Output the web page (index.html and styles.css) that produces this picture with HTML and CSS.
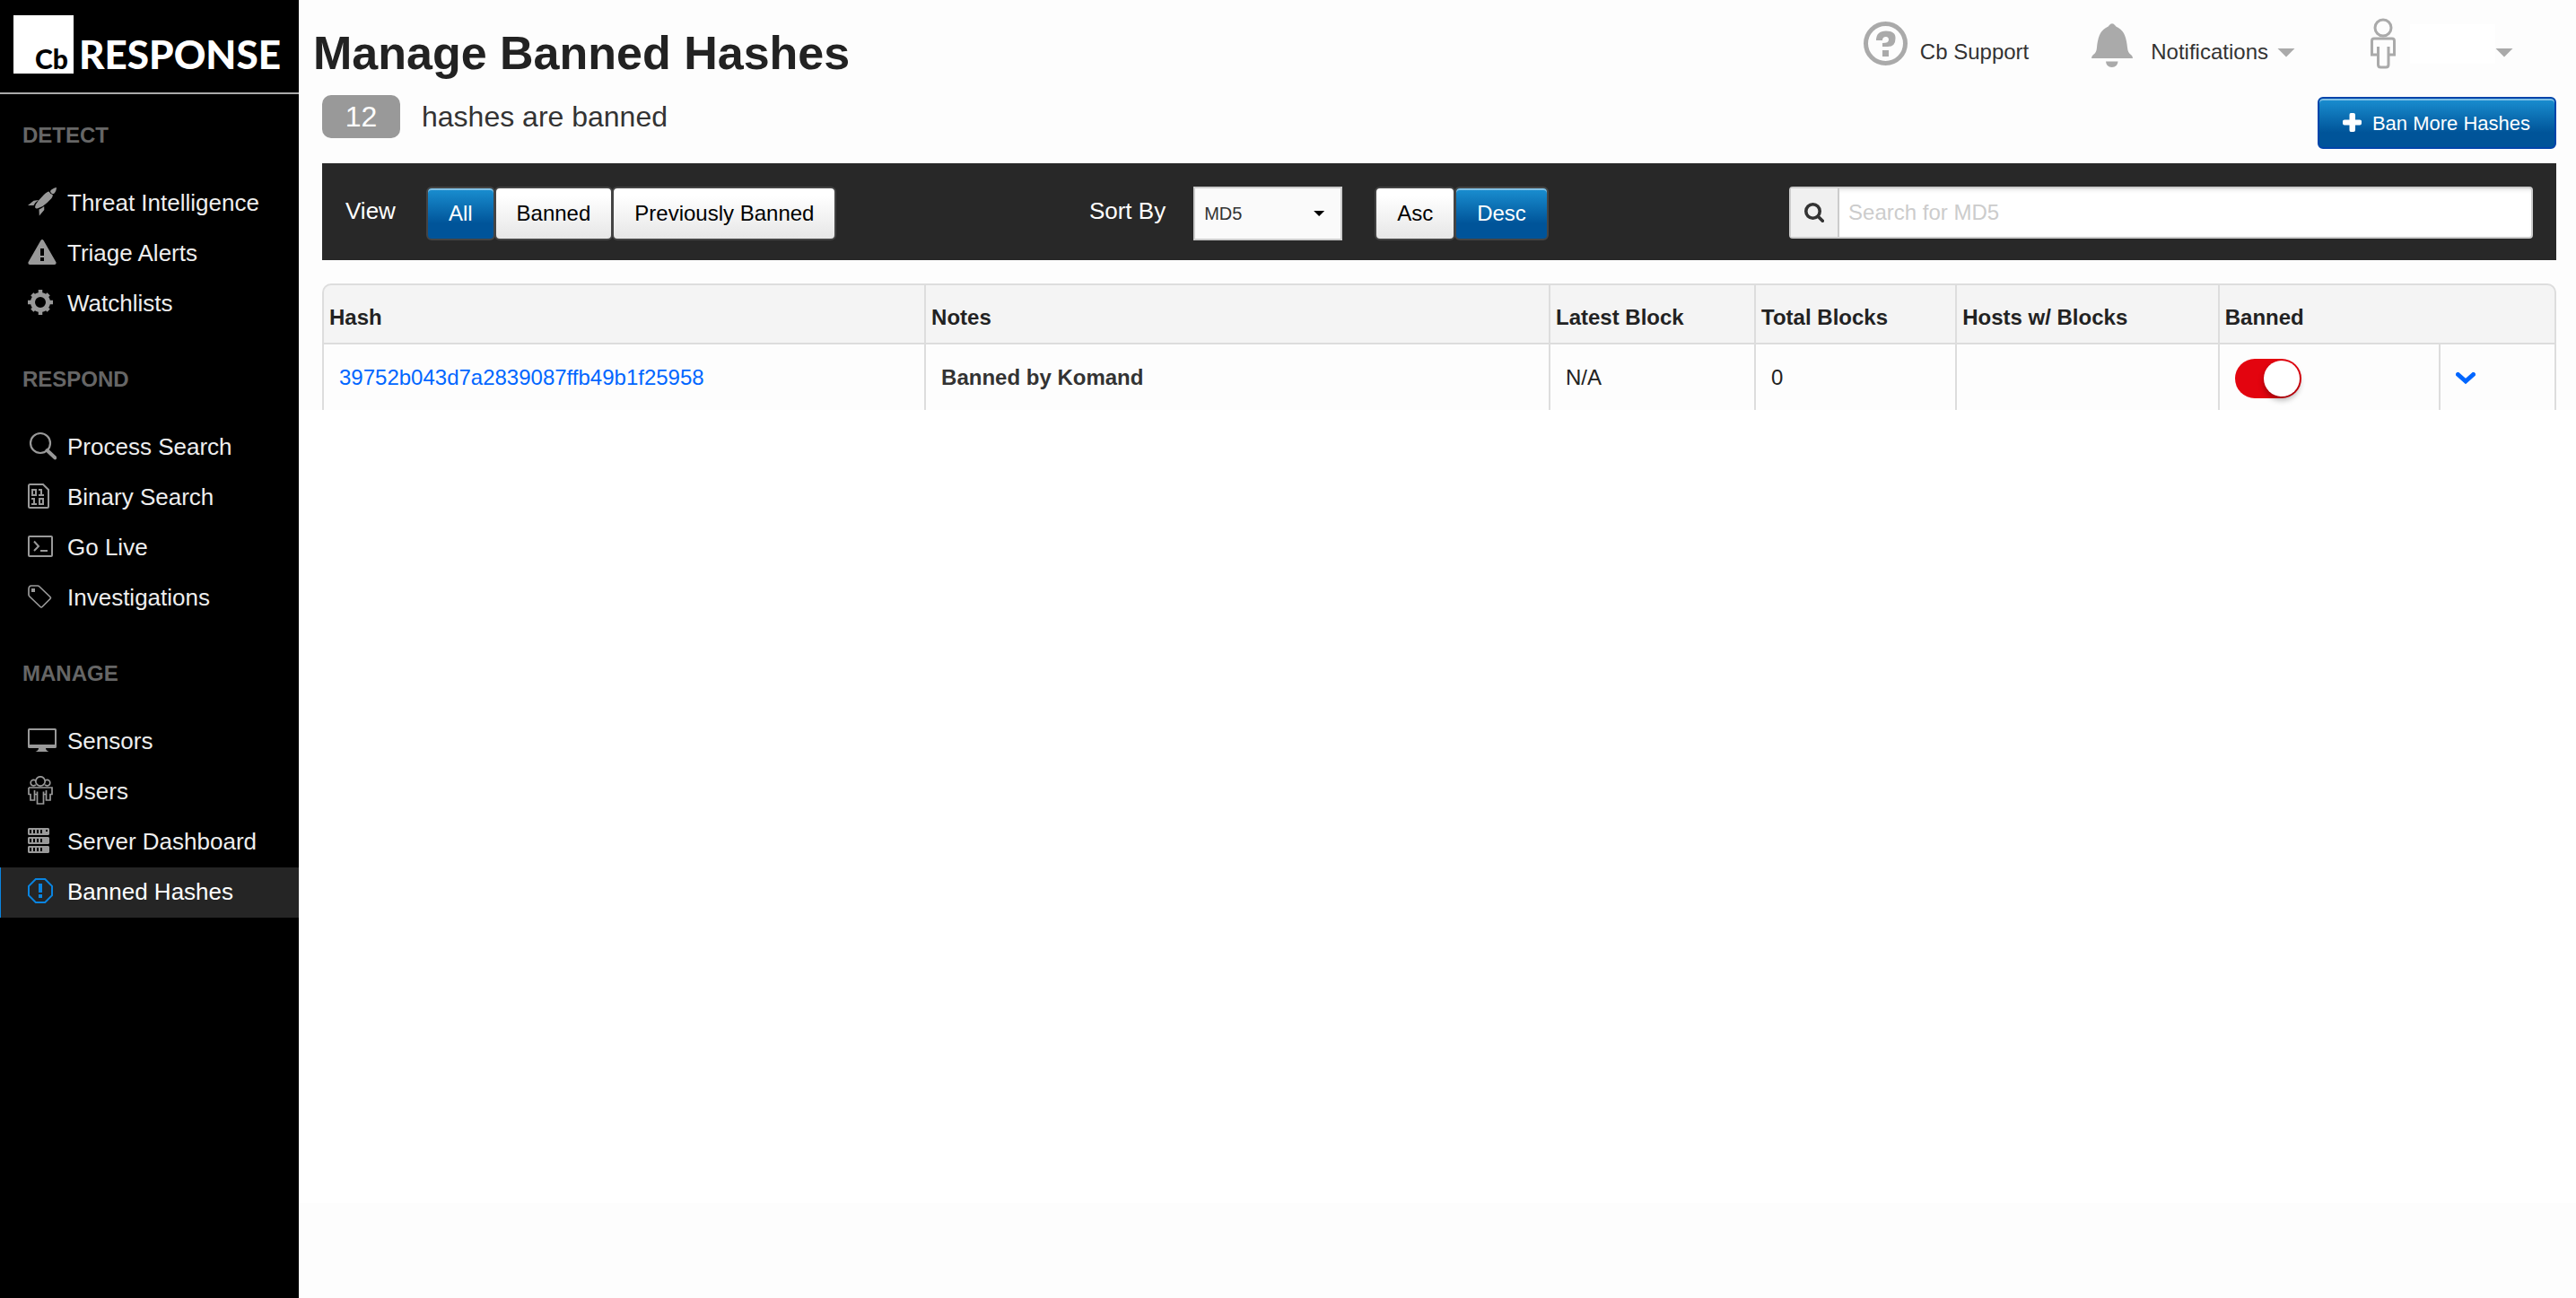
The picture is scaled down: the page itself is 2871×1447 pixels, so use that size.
FILE: index.html
```html
<!DOCTYPE html>
<html lang="en">
<head>
<meta charset="utf-8">
<title>Manage Banned Hashes</title>
<link rel="stylesheet" href="styles.css">
</head>
<body>
<div class="app">
  <aside class="sidebar">
    <a class="brand" href="#"><span class="brand-box">Cb</span><span class="brand-name">RESPONSE</span></a>
    <nav class="menu" aria-label="Main">
      <section class="menu-section">
        <h2>DETECT</h2>
        <ul>
          <li><a href="#"><svg viewBox="0 0 32 32" fill="currentColor"><path d="M32 0C29 .5 26.500 2 25 4L25.500 5.500 27 7 29 7C31 5 32 2.500 32 0ZM23.500 4.500Q21.500 4.500 18 8L11.500 15Q8.500 18.500 8 22Q8.500 24 11 23.200L16.500 21Q22.500 16.500 26.500 12Q28 10 27.800 8Q25 7.500 23.500 4.500ZM12 14L6.500 14.700 0 20H6.500Q8 16.500 12 14ZM18.200 21L18.300 25 12.800 31.500 12.500 24.500Q15.500 23 18.200 21Z"/></svg>Threat Intelligence</a></li>
          <li><a href="#"><svg viewBox="0 0 32 32" fill="currentColor"><path fill-rule="evenodd" d="M14.300 3.200Q16 .8 17.700 3.200L31.600 27.500Q32 29.800 30 30H2Q0 29.800 .4 27.500ZM14 12V20H18V12ZM14 22V26H18V22Z"/></svg>Triage Alerts</a></li>
          <li><a href="#"><svg viewBox="0 0 32 32"><circle cx="14" cy="16" r="8.500" fill="none" stroke="currentColor" stroke-width="5"/><path d="M14 2V7M14 25V30M0 16H5M23 16H28M4.800 6.800L8 10M20 22L23.200 25.200M4.800 25.200L8 22M20 10L23.200 6.800" fill="none" stroke="currentColor" stroke-width="4.500"/></svg>Watchlists</a></li>
        </ul>
      </section>
      <section class="menu-section">
        <h2>RESPOND</h2>
        <ul>
          <li><a href="#"><svg viewBox="0 0 32 32" fill="none" stroke="currentColor"><circle cx="14" cy="13" r="11" stroke-width="2.200"/><path d="M21.500 21L30.300 29.300" stroke-width="4" stroke-linecap="round"/></svg>Process Search</a></li>
          <li><a href="#"><svg viewBox="0 0 32 32" fill="none" stroke="currentColor" stroke-width="2"><path d="M2.500 3H17L23 9V27.500Q23 29 21.500 29H2.500Q1 29 1 27.500V4.500Q1 3 2.500 3Z"/><path d="M5 9H9V15H5ZM12 9H15V15M12 15H18M4 19H7V25M4 25H10M13 19H17V25H13Z"/></svg>Binary Search</a></li>
          <li><a href="#"><svg viewBox="0 0 32 32" fill="none" stroke="currentColor" stroke-width="2"><rect x="1" y="5" width="26" height="22" rx="1"/><path d="M7 10.500L12 16 7 21M14 21H22"/></svg>Go Live</a></li>
          <li><a href="#"><svg viewBox="0 0 32 32" fill="none" stroke="currentColor" stroke-width="1.700"><path d="M1 8Q1 4 4 4H11Q12 4 13 5L25 16.500Q26 17.500 25 18.500L16 27.500Q15 28.500 14 27.500L2 16Q1 15 1 14Z"/><path d="M4 7H8V11H4Z" fill="currentColor" stroke="none"/></svg>Investigations</a></li>
        </ul>
      </section>
      <section class="menu-section">
        <h2>MANAGE</h2>
        <ul>
          <li><a href="#"><svg viewBox="0 0 32 32" fill="currentColor"><path fill-rule="evenodd" d="M1.500 3H30.500Q32 3 32 4.500V23.500Q32 25 30.500 25H20Q20 27.500 23.500 29H8.500Q12 27.500 12 25H1.500Q0 25 0 23.500V4.500Q0 3 1.500 3ZM2 5V21H30V5Z"/></svg>Sensors</a></li>
          <li><a href="#"><svg viewBox="0 0 32 32" fill="none" stroke="currentColor" stroke-width="1.700"><circle cx="14" cy="6" r="5.200"/><path d="M9 5.500A3.300 3.300 0 1 0 9 9.800M19 5.500A3.300 3.300 0 1 1 19 9.800M1 13H27V20.500H25V27H20.500V16M1 13V20.500H3V27H7.500V16M7.500 20.500H10.500M20.500 20.500H17.500M10.500 17.500V31H17.500V17.500"/></svg>Users</a></li>
          <li><a href="#"><svg viewBox="0 0 32 32" fill="currentColor"><path fill-rule="evenodd" d="M1 2H23L24 3V9L23 10H1L0 9V3ZM2 4V8H4V4ZM6 4V8H8V4ZM10 4V8H12V4ZM14 4V8H16V4ZM20 4V6H22V4ZM1 12H23L24 13V19L23 20H1L0 19V13ZM2 14V18H4V14ZM6 14V18H8V14ZM10 14V18H12V14ZM14 14V18H16V14ZM1 22H23L24 23V29L23 30H1L0 29V23ZM2 24V28H4V24ZM6 24V28H8V24ZM10 24V28H12V24ZM14 24V28H16V24Z"/></svg>Server Dashboard</a></li>
          <li><a href="#" class="active" aria-current="page"><svg viewBox="0 0 32 32"><path d="M8.800 3H19.200L27 10.800V21.200L19.200 29H8.800L1 21.200V10.800Z" fill="none" stroke="currentColor" stroke-width="2"/><path d="M12 8H16V18H12ZM12 20H16V24H12Z" fill="currentColor"/></svg>Banned Hashes</a></li>
        </ul>
      </section>
    </nav>
  </aside>

  <main class="main">
    <header class="top">
      <h1>Manage Banned Hashes</h1>
      <ul class="user-nav">
        <li><a href="#"><svg class="icon-help" viewBox="0 0 49 49"><circle cx="24.500" cy="24.500" r="22" fill="none" stroke="currentColor" stroke-width="5"/><path d="M14 21Q14 10.500 25 10.500T35.500 19Q35.500 28 27 28H21V24Q28 24 28 20.500Q28 17 25 17Q21 17 21 21ZM21 32H28V39H21Z" fill="currentColor"/></svg><span>Cb Support</span></a></li>
        <li><button type="button"><svg class="icon-bell" viewBox="0 0 46 49" fill="currentColor"><path d="M19.500 2.500Q23-2 26.500 2.500Q27 3.500 30 5C37 9 39 17 40 27Q40.500 33 44 35Q46 36.500 46 39H0Q0 36.500 2 35Q5.500 33 6 27C7 17 9 9 16 5Q19 3.500 19.500 2.500ZM16 42.500H29.500Q29 49 22.750 49T16 42.500Z"/></svg><span>Notifications</span><i class="caret"></i></button></li>
        <li><button type="button" aria-label="Account"><svg class="icon-person" viewBox="0 0 28 57" fill="none" stroke="currentColor" stroke-width="3"><circle cx="14" cy="11" r="9"/><path d="M8.500 32V52Q8.500 55 11.500 55H17Q20 55 20 52V32M8.500 41H1.500V25.500Q1.500 23 4 23H24Q26.500 23 26.500 25.500V41H20"/></svg><span class="user-name"></span><i class="caret"></i></button></li>
      </ul>
    </header>

    <div class="summary">
      <p><span class="badge">12</span>hashes are banned</p>
      <button class="btn btn-primary btn-ban" type="button"><svg viewBox="0 0 21 21" fill="currentColor"><path d="M9 0H12Q14 0 14 2V7.500H19Q21 7.500 21 9V11.500Q21 13.500 19 13.500H14V19Q14 21 12 21H9Q7.500 21 7.500 19V13.500H2Q0 13.500 0 11.500V9Q0 7.500 2 7.500H7.500V2Q7.500 0 9 0Z"/></svg>Ban More Hashes</button>
    </div>

    <div class="toolbar">
      <div class="tool">
        <span class="tool-label">View</span>
        <div class="btn-group view-group" role="group" aria-label="View"><button class="btn btn-primary" type="button">All</button><button class="btn" type="button">Banned</button><button class="btn" type="button">Previously Banned</button></div>
      </div>
      <div class="tool">
        <label class="tool-label" for="sort">Sort By</label>
        <div class="select"><select id="sort"><option>MD5</option></select><i></i></div>
        <div class="btn-group" role="group" aria-label="Sort order"><button class="btn" type="button">Asc</button><button class="btn btn-primary" type="button">Desc</button></div>
      </div>
      <div class="search">
        <button type="button" aria-label="Search"><svg viewBox="0 0 22 22" fill="none" stroke="currentColor"><circle cx="9.500" cy="9.500" r="7.700" stroke-width="3.600"/><path d="M15.500 15.500L20.300 20.300" stroke-width="3.600" stroke-linecap="round"/></svg></button>
        <input type="text" placeholder="Search for MD5" aria-label="Search for MD5">
      </div>
    </div>

    <div class="results">
      <table>
        <colgroup><col class="c-hash"><col class="c-notes"><col class="c-latest"><col class="c-total"><col class="c-hosts"><col class="c-banned"><col class="c-more"></colgroup>
        <thead>
          <tr><th>Hash</th><th>Notes</th><th>Latest Block</th><th>Total Blocks</th><th>Hosts w/ Blocks</th><th colspan="2">Banned</th></tr>
        </thead>
        <tbody>
          <tr>
            <td><a href="#">39752b043d7a2839087ffb49b1f25958</a></td>
            <td class="notes">Banned by Komand</td>
            <td>N/A</td>
            <td>0</td>
            <td></td>
            <td><input class="toggle" type="checkbox" checked aria-label="Banned"></td>
            <td><button class="more" type="button" aria-label="Show details"><svg viewBox="0 0 22 14" fill="none" stroke="currentColor" stroke-width="5" stroke-linecap="round"><path d="M2.500 2.500L11 10 19.500 2.500"/></svg></button></td>
          </tr>
        </tbody>
      </table>
    </div>
  </main>
</div>
</body>
</html>
```
FILE: styles.css
```css
* { box-sizing: border-box; }

body {
  margin: 0;
  background: #fdfdfd;
  color: #333;
  font: 24px/28px "Liberation Sans", Arial, sans-serif;
}

h1, h2, p, ul { margin: 0; padding: 0; }
ul { list-style: none; }
a { color: #06f; text-decoration: none; }
button, input, select { font: inherit; color: inherit; }
button { margin: 0; padding: 0; border: 0; background: none; cursor: pointer; }
svg { display: block; flex: none; }

.app { display: flex; min-height: 100vh; }

/* Sidebar */
.sidebar { flex: none; width: 333px; background: #000; }

.brand {
  display: flex;
  align-items: flex-start;
  gap: 6px;
  height: 105px;
  padding: 17px 0 0 15px;
  border-bottom: 2px solid #aaa;
  color: #fff;
  font-family: Lato, sans-serif;
}
.brand-box {
  display: flex;
  align-items: flex-end;
  justify-content: flex-end;
  width: 67px;
  height: 65px;
  padding: 0 6px 0 0;
  background: #fff;
  color: #000;
  font-size: 30px;
  font-weight: 900;
  line-height: 34px;
}
.brand-name { padding-top: 20px; font-size: 44px; font-weight: 900; line-height: 46px; }

.menu { padding-top: 32px; }
.menu-section + .menu-section { margin-top: 42px; }
.menu h2 { margin: 0 0 34px 25px; color: #666; font-size: 24px; line-height: 28px; }
.menu a {
  display: flex;
  align-items: center;
  gap: 12px;
  height: 56px;
  padding: 0 0 2px 30px;
  border-left: 1px solid transparent;
  color: #eee;
  font-size: 26px;
}
.menu svg { width: 32px; height: 32px; margin-bottom: 2px; color: #999; }
.menu .active { border-left-color: #0a84e0; background: #252525; color: #fff; }
.menu .active svg { color: #0a84e0; }

/* Header */
.main { flex: 1; min-width: 0; display: flex; flex-direction: column; }

.top { display: flex; justify-content: space-between; padding: 20px 70px 17px 16px; }
h1 { padding-top: 9px; color: #222; font-size: 52px; line-height: 60px; }

.user-nav { display: flex; align-items: flex-start; }
.user-nav a, .user-nav button { display: flex; align-items: center; height: 57px; color: #333; }
.user-nav li + li { margin-left: 70px; }
.user-nav li:last-child { margin-left: 84px; }
.user-nav svg { color: #aaa; }
.user-nav span { padding-top: 18px; }
.icon-help { width: 49px; height: 49px; margin-right: 14px; }
.icon-bell { width: 46px; height: 49px; margin: 4px 20px 0 0; }
.icon-person { width: 28px; height: 57px; }
.user-name { width: 95px; height: 44px; margin-left: 16px; background: #fff; }
.caret {
  width: 20px;
  height: 10px;
  margin-top: 20px;
  background: #aaa;
  clip-path: polygon(0 0, 100% 0, 50% 100%);
}
.user-nav span + .caret { margin-left: 10px; }
.user-nav .user-name + .caret { margin-left: 0; }

.summary {
  display: flex;
  align-items: flex-start;
  justify-content: space-between;
  padding: 0 22px 16px 26px;
}
.summary p { display: flex; gap: 24px; font-size: 32px; line-height: 48px; }
.badge { width: 87px; border-radius: 10px; background: #999; color: #fff; text-align: center; }

/* Buttons */
.btn {
  height: 60px;
  padding: 0 23px;
  border: 2px solid #444;
  border-radius: 6px;
  background: linear-gradient(#fff, #fff 15%, #e6e6e6);
  color: #000;
}
.btn + .btn { margin-left: -1px; }
.btn-primary {
  background: linear-gradient(#1a8fd1, #005499 70%);
  box-shadow: inset 0 2px 0 rgba(255, 255, 255, .45);
  color: #fff;
}
.btn-group { display: flex; }
.btn-ban {
  display: flex;
  align-items: center;
  gap: 12px;
  height: 58px;
  margin-top: 2px;
  padding: 2px 27px 0 26px;
  border-color: #0044aa;
  font-size: 22px;
}
.btn-ban svg { width: 21px; height: 21px; margin-bottom: 4px; }

/* Toolbar */
.toolbar {
  display: grid;
  grid-template-columns: 34fr 32fr 34fr;
  margin: 0 22px 0 26px;
  padding: 26px 26px 22px;
  background: #282828;
}
.tool { display: flex; align-items: flex-start; }
.tool-label { padding-top: 13px; color: #fff; font-size: 26px; }
.view-group { margin-left: 34px; }

.select { display: grid; width: 166px; height: 60px; margin: 0 36px 0 31px; }
.select > * { grid-area: 1 / 1; }
.select select {
  appearance: none;
  padding: 0 10px;
  border: 2px solid #ccc;
  border-radius: 0;
  background: #fafafa;
  font-size: 20px;
}
.select i {
  align-self: center;
  justify-self: end;
  width: 12px;
  height: 6px;
  margin-right: 20px;
  background: #000;
  clip-path: polygon(0 0, 100% 0, 50% 100%);
  pointer-events: none;
}

.search {
  display: flex;
  height: 58px;
  border: 2px solid #ccc;
  border-radius: 4px;
  background: #fff;
}
.search button { flex: none; width: 54px; padding-left: 15px; border-right: 2px solid #ccc; background: #f0f0f0; }
.search svg { width: 22px; height: 22px; }
.search input {
  flex: 1;
  min-width: 0;
  padding: 0 10px;
  border: 0;
  background: none;
  box-shadow: inset 0 4px 4px -2px rgba(0, 0, 0, .1);
}
.search input::placeholder { color: #ccc; }

/* Results */
.results { flex: 1; margin: 26px 0 106px; padding: 0 22px 0 26px; background: linear-gradient(#fdfdfd 141px, #fff 141px); }
table {
  width: 100%;
  table-layout: fixed;
  border-collapse: separate;
  border-spacing: 0;
}
.c-hash { width: 26.95%; }
.c-notes { width: 27.95%; }
.c-latest { width: 9.2%; }
.c-total { width: 9%; }
.c-hosts { width: 11.75%; }
.c-banned { width: 9.9%; }
.c-more { width: 5.25%; }
th {
  padding: 22px 6px 14px;
  border: 2px solid #ddd;
  border-right: 0;
  background: #f4f4f4;
  color: #222;
  text-align: left;
}
th:first-child { border-top-left-radius: 10px; }
th:last-child { border-right: 2px solid #ddd; border-top-right-radius: 10px; }
td { height: 73px; padding: 0 17px; border-left: 2px solid #ddd; color: #222; }
td:last-child { border-right: 2px solid #ddd; }
.notes { color: #333; font-weight: bold; }

.toggle {
  appearance: none;
  display: flex;
  justify-content: flex-end;
  width: 74px;
  height: 44px;
  margin: 2px 0 0;
  padding: 2px;
  border-radius: 22px;
  background: #e3040f;
}
.toggle::before {
  content: "";
  width: 40px;
  height: 40px;
  border-radius: 50%;
  background: #fff;
  box-shadow: 0 4px 6px rgba(0, 0, 0, .3);
}
.more { display: block; margin-top: 2px; color: #06f; }
.more svg { width: 22px; height: 14px; }
```
